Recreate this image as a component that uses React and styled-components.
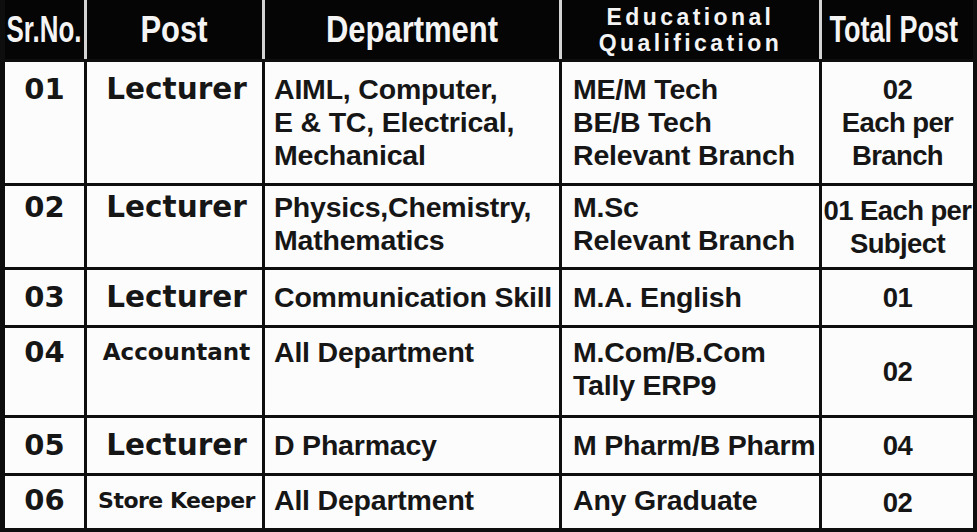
import React from 'react';
import styled, { createGlobalStyle } from 'styled-components';

const Global = createGlobalStyle`
  html, body { margin: 0; padding: 0; background: #fff; }
  body { width: 977px; height: 532px; overflow: hidden; }
`;

const COLS = '79px 175px 294px 257px 151px';

const Sheet = styled.div`
  width: 977px;
  height: 532px;
  box-sizing: border-box;
  background: #0e0e0e;
  padding: 0 4px 4px 5px;
  display: flex;
  flex-direction: column;
  gap: 3px;
`;

const HeadRow = styled.div`
  display: grid;
  grid-template-columns: ${COLS};
  column-gap: 3px;
  height: 59px;
  flex: none;
  background: #d4d4d4;
`;

const HeadCell = styled.div`
  background: #050505;
  color: #f4f4f4;
  display: flex;
  align-items: center;
  justify-content: center;
  overflow: visible;
`;

const HeadLabel = styled.span`
  display: inline-block;
  font-family: "Liberation Sans", Arial, sans-serif;
  font-weight: 700;
  font-size: ${p => p.$size || 36}px;
  line-height: 1;
  white-space: nowrap;
  margin-right: ${p => p.$shift || 0}px;
  transform: scaleX(${p => p.$sx || 0.86});
`;

const HeadStack = styled.span`
  display: inline-block;
  font-family: "Liberation Sans", Arial, sans-serif;
  font-weight: 700;
  font-size: 23px;
  line-height: 26.5px;
  letter-spacing: 3.4px;
  text-align: center;
  white-space: nowrap;
  margin-top: 1px;
`;

const BodyRow = styled.div`
  display: grid;
  grid-template-columns: ${COLS};
  column-gap: 3px;
  ${p => (p.$h ? `height: ${p.$h}px; flex: none;` : 'flex: 1;')}
`;

const Cell = styled.div`
  background: #fcfcfc;
  color: #161616;
  box-sizing: border-box;
  display: flex;
  flex-direction: column;
  padding-top: ${p => p.$pad}px;
  white-space: nowrap;
  overflow: visible;
`;

const NumCell = styled(Cell)`
  align-items: center;
  font-family: "DejaVu Sans", Verdana, sans-serif;
  font-weight: 700;
  font-size: 29px;
  line-height: 33px;
`;

const PostCell = styled(Cell)`
  align-items: center;
  padding-left: 4px;
  font-family: "DejaVu Sans", Verdana, sans-serif;
  font-weight: 700;
  font-size: ${p => p.$size || 29.5}px;
  letter-spacing: ${p => p.$ls || 0}px;
  line-height: 33px;
`;

const TextCell = styled(Cell)`
  padding-left: ${p => p.$left || 10}px;
  font-family: "Liberation Sans", Arial, sans-serif;
  font-weight: 700;
  font-size: 28.5px;
  letter-spacing: -0.2px;
  line-height: 33px;
`;

const TotalCell = styled(Cell)`
  padding-top: 0;
  align-items: center;
  justify-content: center;
  text-align: center;
  font-family: "Liberation Sans", Arial, sans-serif;
  font-weight: 700;
  font-size: 27.5px;
  letter-spacing: -0.6px;
  line-height: 33px;
`;

const Line = styled.span`
  display: block;
`;

const rows = [
  {
    h: 121, pad: 10.5, no: '01', post: 'Lecturer',
    dept: ['AIML, Computer,', 'E & TC, Electrical,', 'Mechanical'],
    edu: ['ME/M Tech', 'BE/B Tech', 'Relevant Branch'],
    total: ['02', 'Each per', 'Branch'],
  },
  {
    h: 81, pad: 4.5, no: '02', post: 'Lecturer',
    dept: ['Physics,Chemistry,', 'Mathematics'],
    edu: ['M.Sc', 'Relevant Branch'],
    total: ['01 Each per', 'Subject'],
  },
  {
    h: 55, pad: 11, no: '03', post: 'Lecturer',
    dept: ['Communication Skill'],
    edu: ['M.A. English'],
    total: ['01'],
  },
  {
    h: 87, pad: 7.5, no: '04', post: 'Accountant', postSize: 23,
    dept: ['All Department'],
    edu: ['M.Com/B.Com', 'Tally ERP9'],
    total: ['02'],
  },
  {
    h: 55, pad: 11, no: '05', post: 'Lecturer',
    dept: ['D Pharmacy'],
    edu: ['M Pharm/B Pharm'],
    total: ['04'],
  },
  {
    h: null, pad: 8, no: '06', post: 'Store Keeper', postSize: 22, postLs: -0.5,
    dept: ['All Department'],
    edu: ['Any Graduate'],
    total: ['02'],
  },
];

export default function App() {
  return (
    <>
      <Global />
      <Sheet>
        <HeadRow>
          <HeadCell><HeadLabel $sx={0.72}>Sr.No.</HeadLabel></HeadCell>
          <HeadCell><HeadLabel>Post</HeadLabel></HeadCell>
          <HeadCell><HeadLabel>Department</HeadLabel></HeadCell>
          <HeadCell>
            <HeadStack>
              <Line>Educational</Line>
              <Line>Qualification</Line>
            </HeadStack>
          </HeadCell>
          <HeadCell><HeadLabel $sx={0.75} $shift={8}>Total Post</HeadLabel></HeadCell>
        </HeadRow>
        {rows.map(r => (
          <BodyRow key={r.no} $h={r.h}>
            <NumCell $pad={r.pad}>{r.no}</NumCell>
            <PostCell $pad={r.pad} $size={r.postSize} $ls={r.postLs}>{r.post}</PostCell>
            <TextCell $pad={r.pad} $left={9}>
              {r.dept.map(t => <Line key={t}>{t}</Line>)}
            </TextCell>
            <TextCell $pad={r.pad} $left={11}>
              {r.edu.map(t => <Line key={t}>{t}</Line>)}
            </TextCell>
            <TotalCell $pad={0}>
              {r.total.map(t => <Line key={t}>{t}</Line>)}
            </TotalCell>
          </BodyRow>
        ))}
      </Sheet>
    </>
  );
}
